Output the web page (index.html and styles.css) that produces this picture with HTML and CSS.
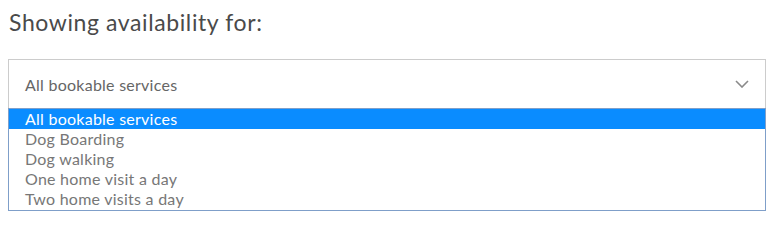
FILE: index.html
```html
<!DOCTYPE html>
<html>
<head>
<meta charset="utf-8">
<link rel="stylesheet" href="styles.css">
</head>
<body>
<div class="wrap">
  <h2 class="title">Showing availability for:</h2>
  <div class="picker">
    <div class="select">
      <span class="value">All bookable services</span>
      <svg class="chev" width="14" height="8" viewBox="0 0 14 8"><path d="M1 1 L7 7 L13 1" fill="none" stroke="#8a8a8a" stroke-width="1.6"/></svg>
    </div>
    <ul class="options">
      <li class="opt active">All bookable services</li>
      <li class="opt">Dog Boarding</li>
      <li class="opt">Dog walking</li>
      <li class="opt">One home visit a day</li>
      <li class="opt">Two home visits a day</li>
    </ul>
  </div>
</div>
</body>
</html>
```
FILE: styles.css
```css
html, body { margin: 0; padding: 0; background: #fff; }
body { font-family: Lato, "Open Sans", sans-serif; }
.wrap { padding: 0 3px 0 8px; }
.title {
  margin: 0;
  padding-top: 9px;
  padding-left: 1px;
  font-size: 23px;
  letter-spacing: 0.6px;
  line-height: 26px;
  font-weight: 400;
  color: #4a4a4a;
  height: 59px;
  box-sizing: border-box;
}
.picker { display: flex; flex-direction: column; }
.select {
  height: 50px;
  box-sizing: border-box;
  border: 1px solid #cccccc;
  display: flex;
  align-items: center;
  justify-content: space-between;
  padding: 0 16px 0 16px;
}
.value { font-size: 16px; letter-spacing: 0.25px; color: #666; }
.chev { display: block; }
.options {
  list-style: none;
  margin: -1px 0 0 0;
  padding: 0 0 1px 0;
  border: 1px solid #7f9fc9;
}
.opt {
  height: 20px;
  line-height: 20px;
  padding-left: 16px;
  font-size: 16px;
  letter-spacing: 0.25px;
  color: #777;
}
.opt.active { background: #0a8cff; color: #fff; }
```
